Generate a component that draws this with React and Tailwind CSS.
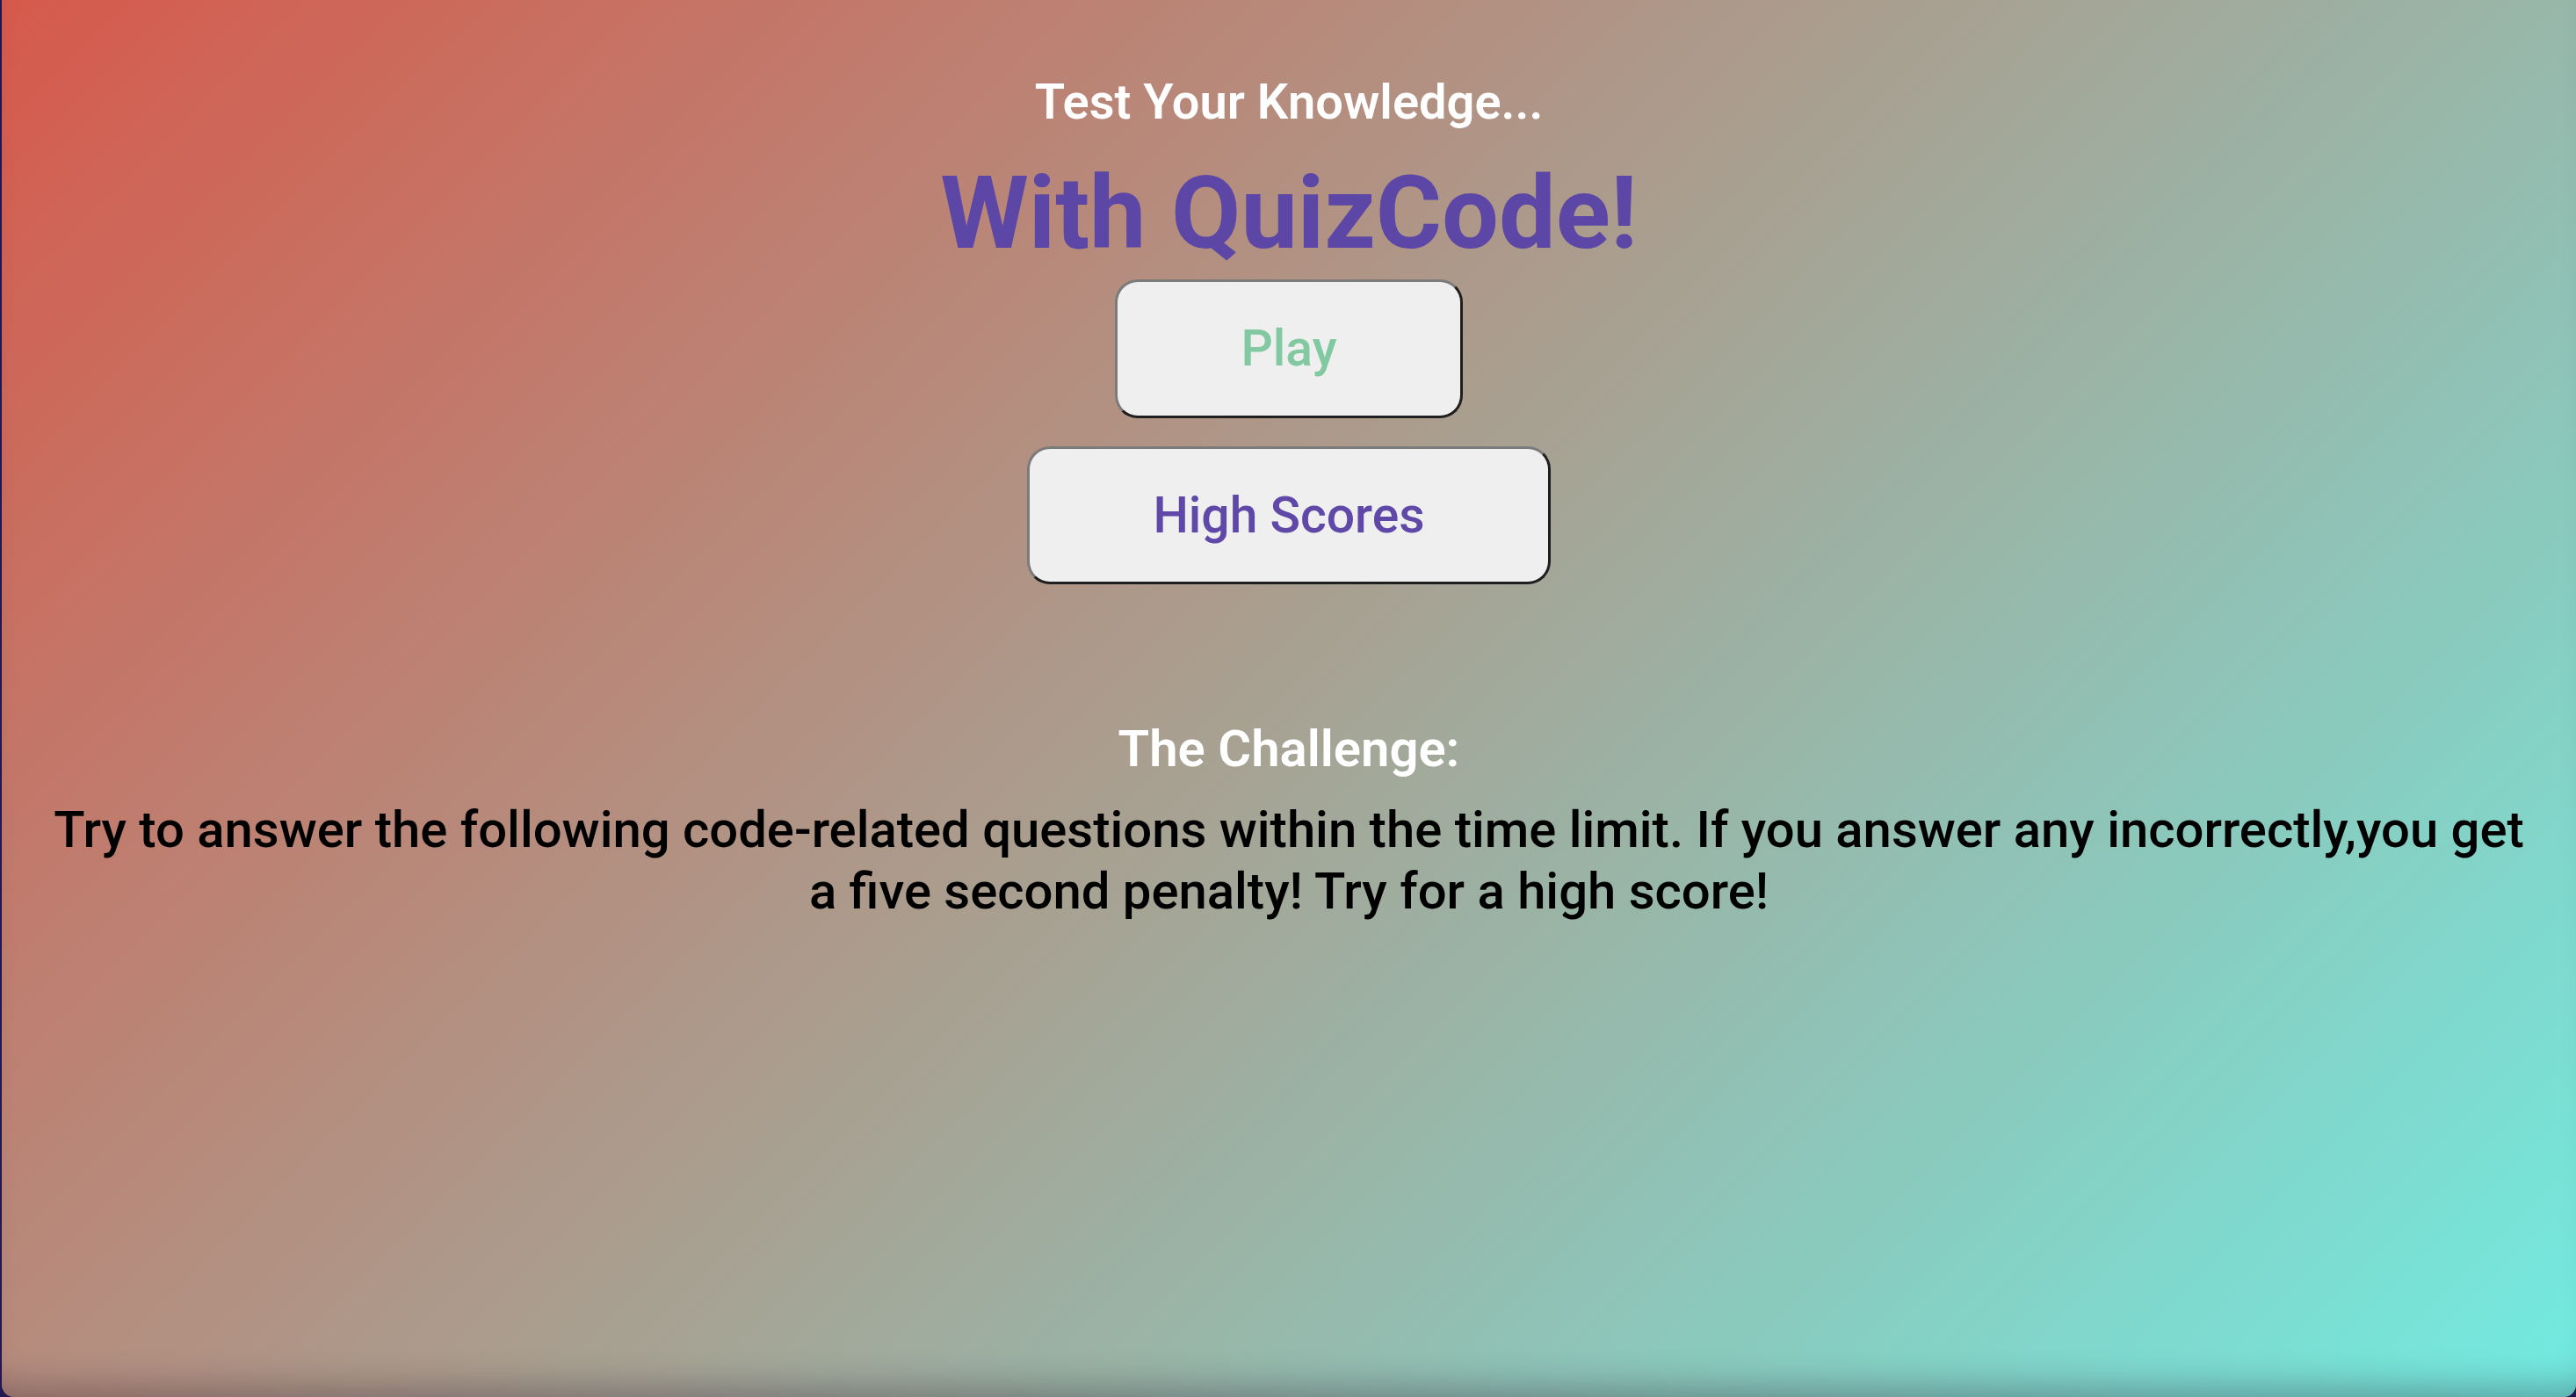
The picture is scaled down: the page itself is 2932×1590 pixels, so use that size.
export default function App() {
  return (
    <div className="h-[1590px] w-full bg-[#24164f] pl-[2px]">
      <div className="flex h-full flex-col items-center overflow-hidden rounded-b-[14px] bg-[linear-gradient(135deg,#d65a4c_0%,#a7a293_50%,#72ebe1_100%)] font-['Roboto',sans-serif] shadow-[inset_0_-40px_40px_-30px_rgba(40,20,40,0.35)]">
        <p className="mt-[81px] text-[56px] leading-[70px] font-semibold text-white">
          Test Your Knowledge...
        </p>
        <h1 className="mt-[22px] text-[115px] leading-[140px] font-bold text-[#5d47a6]">
          With QuizCode!
        </h1>

        <button className="mt-[5px] h-[158px] rounded-[26px] border-[3px] border-t-[#7b7b7b] border-l-[#7b7b7b] border-r-[#1f1f1f] border-b-[#1f1f1f] bg-[#efefef] px-[140px] text-[57px] leading-[68px] font-medium text-[#82c9a1]">
          Play
        </button>
        <button className="mt-[32px] h-[157px] rounded-[26px] border-[3px] border-t-[#7b7b7b] border-l-[#7b7b7b] border-r-[#1f1f1f] border-b-[#1f1f1f] bg-[#efefef] px-[140px] text-[57px] leading-[68px] font-medium text-[#5f48a8]">
          High Scores
        </button>

        <h2 className="mt-[152px] text-[58px] leading-[70px] font-semibold text-white">
          The Challenge:
        </h2>
        <p className="mt-[22px] w-full px-[47px] text-center text-[58px] leading-[70px] font-medium text-black">
          Try to answer the following code-related questions within the time limit. If you answer any incorrectly,you get a five second penalty! Try for a high score!
        </p>
      </div>
    </div>
  );
}
